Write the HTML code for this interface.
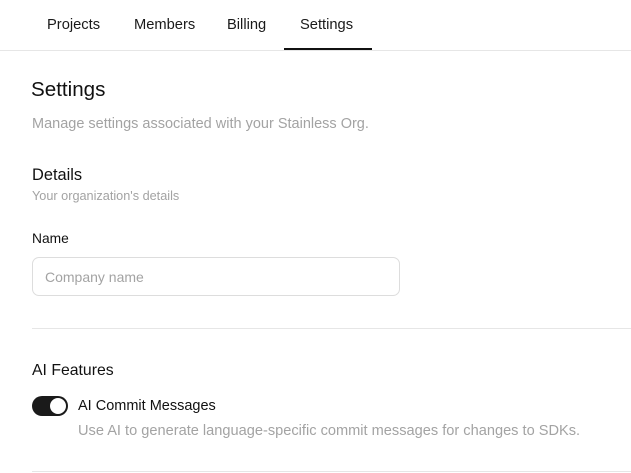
<!DOCTYPE html>
<html><head><style>
*{margin:0;padding:0;box-sizing:border-box}
body{width:631px;height:473px;background:#fff;font-family:"Liberation Sans",sans-serif;position:relative;overflow:hidden;color:#111}
.a{position:absolute;white-space:nowrap}
.tab{top:17px;font-size:14.7px;color:#1a1a1a}
</style></head><body>
<div class="a tab" style="left:47px">Projects</div>
<div class="a tab" style="left:134px">Members</div>
<div class="a tab" style="left:227px">Billing</div>
<div class="a tab" style="left:300px">Settings</div>
<div class="a" style="left:0;top:50px;width:631px;height:1px;background:#e6e6e6"></div>
<div class="a" style="left:284px;top:48px;width:88px;height:2px;background:#111"></div>
<div class="a" style="left:31px;top:78px;font-size:20.6px">Settings</div>
<div class="a" style="left:32px;top:116px;font-size:14.5px;color:#a3a3a3">Manage settings associated with your Stainless Org.</div>
<div class="a" style="left:32px;top:166px;font-size:16.4px">Details</div>
<div class="a" style="left:32px;top:189px;font-size:12.7px;color:#a3a3a3">Your organization's details</div>
<div class="a" style="left:32px;top:231px;font-size:13.8px">Name</div>
<div class="a" style="left:32px;top:257px;width:368px;height:39px;border:1px solid #ddd;border-radius:7px"></div>
<div class="a" style="left:45px;top:269px;font-size:14px;color:#a3a3a3">Company name</div>
<div class="a" style="left:32px;top:328px;width:599px;height:1px;background:#e6e6e6"></div>
<div class="a" style="left:32px;top:362px;font-size:15.8px">AI Features</div>
<div class="a" style="left:32px;top:396px;width:36px;height:20px;border-radius:10px;background:#1a1a1a"></div>
<div class="a" style="left:50px;top:398px;width:16px;height:16px;border-radius:8px;background:#fff"></div>
<div class="a" style="left:78px;top:398px;font-size:14.5px">AI Commit Messages</div>
<div class="a" style="left:78px;top:423px;font-size:14.6px;color:#a3a3a3">Use AI to generate language-specific commit messages for changes to SDKs.</div>
<div class="a" style="left:32px;top:471px;width:599px;height:1px;background:#e6e6e6"></div>
</body></html>
